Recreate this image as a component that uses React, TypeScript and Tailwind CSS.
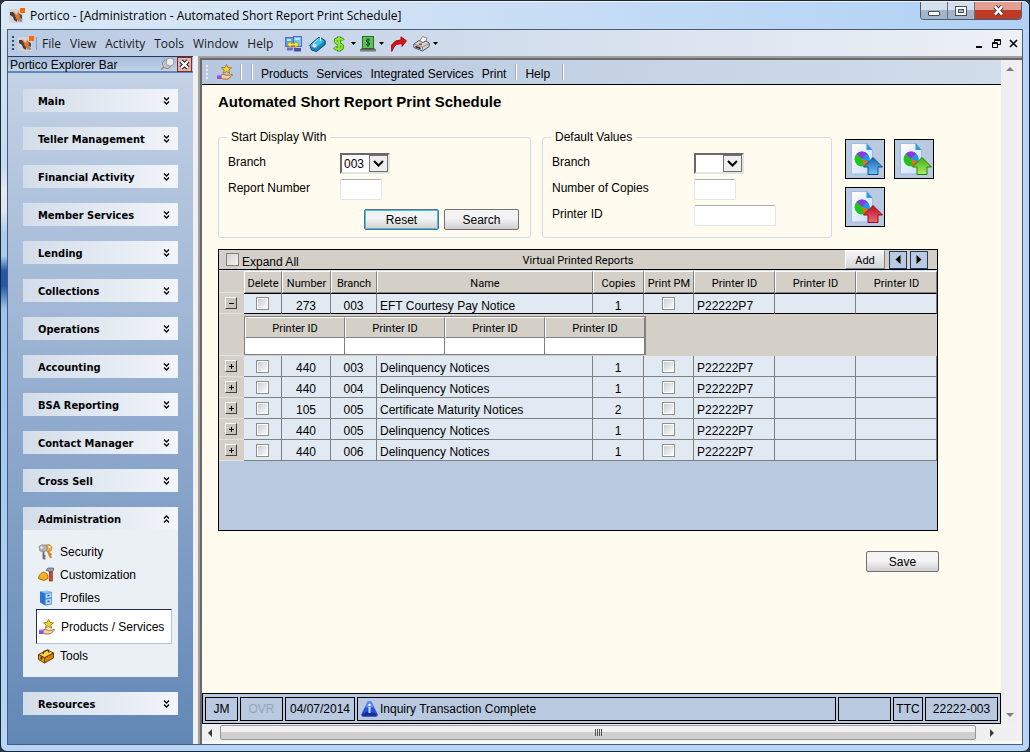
import React from "react";

function LogoIcon() {
  return (
    <svg width="16" height="16" viewBox="0 0 16 16" aria-hidden="true">
      <rect x="0" y="1" width="14" height="14" fill="#d6d3d4" />
      <path d="M1 4l3 0 4 5v5l-3-2-1-3-3-2z" fill="#3d4248" />
      <path d="M6 8l3 1 4 3v2l-4-1z" fill="#7f8b9c" />
      <path d="M9 5l4 2v4l-3-1z" fill="#36506f" />
      <path d="M4 3l4 4 1-4 2 5-1 6-3-4z" fill="#f2701a" />
      <rect x="11" y="0" width="5" height="5" fill="#ff6a00" />
    </svg>
  );
}

function HandStarIcon() {
  return (
    <svg width="16" height="16" viewBox="0 0 16 16" aria-hidden="true">
      <path d="M9.500 .5l1.500 3 3.500.3-2.700 2.200.9 3.300-3.200-1.700-3.200 1.700.9-3.300L4.500 3.800 8 3.500z" fill="#f5cf3a" stroke="#9a7a14" strokeWidth=".9" />
      <path d="M4 10.500h3l2 .7h4l2-1c1 .5 0 1.800-1 2.300l-3 2.500H6l-2-1z" fill="#f8cf9a" stroke="#9a5a22" strokeWidth=".8" />
      <rect x="0" y="10" width="4.500" height="5" fill="#8a55e0" />
      <rect x="0" y="10" width="4.500" height="1.500" fill="#c7a9ff" />
    </svg>
  );
}

function MonitorsIcon() {
  return (
    <svg width="17" height="16" viewBox="0 0 17 16" aria-hidden="true">
      <rect x=".5" y="1.500" width="8" height="9" fill="#4aa8f0" stroke="#6a5fc0" />
      <rect x="8.500" y=".5" width="8" height="10" fill="#67cbff" stroke="#6a5fc0" />
      <path d="M2 3h4v2H2zM10 2h5v2h-5z" fill="#b8ecff" />
      <rect x="2" y="11.500" width="6" height="3" fill="#6a6fc4" />
      <rect x="9" y="12" width="7" height="3.500" fill="#4b4fa4" />
      <path d="M2 8.500l4-3.500v2.300h4V5l4 3.500-4 3.500V9.700H6V12z" fill="#ffe23a" stroke="#a88c00" strokeWidth=".7" />
    </svg>
  );
}

function TagIcon() {
  return (
    <svg width="17" height="16" viewBox="0 0 17 16" aria-hidden="true">
      <path d="M.8 9L9.500 1.500l2.500.3 4.200 3v3.700L7.500 15.500l-5-1.500z" fill="#1788b8" stroke="#0a3f66" />
      <path d="M1.500 9L9.500 2l5.500 3-8 7-5-1z" fill="#3cc0e6" />
      <path d="M4 8l5-4.500" stroke="#b6f0ff" />
      <circle cx="5.500" cy="9.500" r="2" fill="#f6d3f4" />
      <path d="M11.500 5V1" stroke="#e8f8ff" strokeWidth="1.400" />
    </svg>
  );
}

function DollarIcon() {
  return (
    <svg width="12" height="16" viewBox="0 0 12 16" aria-hidden="true">
      <path d="M10 4.500C9 2.500 3 2 2.600 5 2.300 8 9.500 7.500 9.300 10.800 9 14 3 13.500 1.500 11.300M6 .5v15" fill="none" stroke="#2c7a10" strokeWidth="3.600" />
      <path d="M10 4.500C9 2.500 3 2 2.600 5 2.300 8 9.500 7.500 9.300 10.800 9 14 3 13.500 1.500 11.300M6 1v14" fill="none" stroke="#8ae62e" strokeWidth="2.200" />
    </svg>
  );
}

function CashIcon() {
  return (
    <svg width="16" height="16" viewBox="0 0 16 16" aria-hidden="true">
      <rect x="2.500" y=".5" width="11" height="12" fill="#5fc05a" stroke="#23702a" />
      <path d="M10 4.500C9 3 6 3.300 6.200 5c.2 1.600 3.800 1.200 3.600 3C9.600 9.500 7 9.600 6 8.200M8 2.300v8.400" fill="none" stroke="#0b3f12" />
      <path d="M0 13h16v2.500H0z" fill="#7c7f78" />
      <path d="M1 13h14" stroke="#3f423e" />
    </svg>
  );
}

function RedArrowIcon() {
  return (
    <svg width="16" height="16" viewBox="0 0 16 16" aria-hidden="true">
      <path d="M.7 15.500L.5 9 4.500 5 10 3.800V.8l5.500 4-4.500 5.700V7.500L5.500 8.500 3 11z" fill="#dc1414" stroke="#8a0000" strokeWidth=".8" />
    </svg>
  );
}

function PrinterIcon() {
  return (
    <svg width="17" height="16" viewBox="0 0 17 16" aria-hidden="true">
      <path d="M6 6l3.500-5.500 4.500 1.500-2 6z" fill="#fff" stroke="#777" strokeWidth=".8" />
      <path d="M.8 8L6 4.500l4 2 3-1.500 3.200 2v3.500L9.500 15 .8 11.500z" fill="#d2d2d2" stroke="#4a4a4a" strokeWidth=".9" />
      <path d="M1 8l8.500 3 6.500-3.500M9.500 11v4" fill="none" stroke="#8a8a8a" />
      <path d="M2.500 10.500l5 2" stroke="#222" strokeWidth="1.400" />
      <rect x="6" y="7.500" width="3" height="1.500" fill="#e02020" />
    </svg>
  );
}

function KeysIcon() {
  return (
    <svg width="16" height="16" viewBox="0 0 16 16" aria-hidden="true">
      <path d="M9.500 6l3.500 8M11 11l2.500-1.200" stroke="#d0872a" strokeWidth="2.200" />
      <path d="M6 1.500l5-1 3 2.500-1 4-4 .5z" fill="#f2b04a" stroke="#b87420" strokeWidth=".7" />
      <circle cx="11.500" cy="3" r="1.100" fill="#fff" />
      <path d="M5.500 6.500v8.500M5.500 12h2M5.500 14.500h2" stroke="#6f6f6f" strokeWidth="1.900" />
      <path d="M1 2.500l3-1.800 4.500.8 1 3.500-2.500 2.500L2 7z" fill="#b4b4b4" stroke="#7a7a7a" strokeWidth=".7" />
      <circle cx="3.500" cy="3.500" r="1.100" fill="#fff" />
    </svg>
  );
}

function HelmetIcon() {
  return (
    <svg width="16" height="16" viewBox="0 0 16 16" aria-hidden="true">
      <path d="M.5 11.500C1 7 4 5 6.500 5.500c3 .5 3.500 3 3.500 6L6 13.500z" fill="#f7b21b" stroke="#9a5c00" strokeWidth=".9" />
      <path d="M8 3.500l2-2.500h5.500v2.500L14 4v1h-3V4z" fill="#9ba3ad" stroke="#4b5058" strokeWidth=".7" />
      <rect x="11.300" y="5" width="3" height="9" fill="#e0442a" stroke="#7d1608" strokeWidth=".6" />
    </svg>
  );
}

function CabinetIcon() {
  return (
    <svg width="16" height="16" viewBox="0 0 16 16" aria-hidden="true">
      <path d="M2 1.500L9 .7l5 1.500v12l-7 1.300-5-3z" fill="#2c74d4" />
      <path d="M2 1.500L9 .7l5 1.500-6.500 1.300z" fill="#8fc4fa" />
      <path d="M7.500 4l6-1v4.500l-6 1zM7.500 9.500l6-1v5l-6 1.200z" fill="#b7d7f7" />
      <path d="M9.500 5.800l2-.4M9.500 11.500l2-.4" stroke="#2a4f88" strokeWidth="1.300" />
    </svg>
  );
}

function ToolboxIcon() {
  return (
    <svg width="16" height="16" viewBox="0 0 16 16" aria-hidden="true">
      <path d="M.5 6.500L9.500 2l6 3-9 4.800z" fill="#ffd24a" stroke="#5a3400" strokeWidth=".9" />
      <path d="M.5 6.500v5l6 3.500V9.800z" fill="#f0a010" stroke="#5a3400" strokeWidth=".9" />
      <path d="M6.500 9.800v5.200l9-5V5z" fill="#d98408" stroke="#5a3400" strokeWidth=".9" />
      <path d="M5 6l1-2.500 4-1.500 1 2.500" fill="none" stroke="#5a3400" strokeWidth="1.300" />
      <rect x="2.500" y="8.500" width="2" height="3" fill="#5a3400" />
    </svg>
  );
}

function InfoIcon() {
  return (
    <svg width="17" height="17" viewBox="0 0 17 17" aria-hidden="true">
      <path d="M7 1h3l7 14-1 1.500H1L0 15z" fill="#2a52d8" />
      <path d="M7 1h3l3 6-4 1-5-1z" fill="#5f8cf5" />
      <path d="M1 14l7-3 8 3-1 2.500H2z" fill="#16309c" />
      <rect x="7.500" y="4" width="2" height="2" fill="#fff" />
      <rect x="7.500" y="7" width="2" height="6" fill="#cfdcff" />
    </svg>
  );
}

function ReportIcon({ light, dark, edge }: { light: string; dark: string; edge: string }) {
  const id = "arrow" + edge.slice(1);
  return (
    <svg width="36" height="36" viewBox="0 0 36 36" aria-hidden="true">
      <defs>
        <linearGradient id={id} x1="0" y1="0" x2="0" y2="1">
          <stop offset="0" stopColor={dark} />
          <stop offset="1" stopColor={light} />
        </linearGradient>
        <linearGradient id={id + "page"} x1="0" y1="0" x2="1" y2="1">
          <stop offset="0" stopColor="#ffffff" />
          <stop offset="1" stopColor="#c8dcfa" />
        </linearGradient>
      </defs>
      <path d="M4.500 2.500h15l6 6.500v24h-21z" fill={"url(#" + id + "page)"} stroke="#9dbde8" />
      <path d="M19.500 2v7h6z" fill="#2f9ae0" />
      <circle cx="15" cy="18" r="7.500" fill="#1fc41c" />
      <path d="M15 18L9.700 12.700a7.500 7.500 0 0 1 10.600 0z" fill="#9433ee" />
      <path d="M15 18l5.300-5.300a7.500 7.500 0 0 1 1.500 8.300z" fill="#1f95f2" />
      <path d="M15 18l6.800 3a7.500 7.500 0 0 1-4.800 4.300z" fill="#f26a14" />
      <path d="M26 16.500l9.500 9.500h-4.500v7.500H21V26h-4.500z" fill={"url(#" + id + ")"} stroke={edge} />
    </svg>
  );
}

function DoubleChevron({ up = false }: { up?: boolean }) {
  return (
    <svg width="7" height="8" viewBox="0 0 7 8" aria-hidden="true">
      {up ? (
        <path d="M1 3.500L3.500 1 6 3.500M1 7.500L3.500 5 6 7.500" fill="none" stroke="#000" strokeWidth="1.300" />
      ) : (
        <path d="M1 .5L3.500 3 6 .5M1 4.500L3.500 7 6 4.500" fill="none" stroke="#000" strokeWidth="1.300" />
      )}
    </svg>
  );
}

function Caret({ className = "" }: { className?: string }) {
  return (
    <svg className={className} width="5" height="3" viewBox="0 0 5 3" aria-hidden="true">
      <path d="M0 0h5L2.500 3z" fill="#000" />
    </svg>
  );
}

function Grip({ color }: { color: string }) {
  return (
    <svg width="3" height="15" viewBox="0 0 3 15" aria-hidden="true">
      {[0, 4, 8, 12].map((y) => (
        <rect key={y} x="0" y={y} width="2" height="2" fill={color} />
      ))}
    </svg>
  );
}

function TitleBar() {
  return (
    <header className="flex h-[27px] shrink-0 items-start pl-[2px] pr-[1px]">
      <div className="flex h-[27px] items-center gap-[5px]">
        <LogoIcon />
        <h2 className="text-xs whitespace-nowrap text-black">
          Portico - [Administration - Automated Short Report Print Schedule]
        </h2>
      </div>
      <div className="ml-auto flex h-[18px] overflow-hidden rounded-b-[4px] border border-t-0 border-[#4d5b74]">
        <button aria-label="Minimize" className="flex w-[27px] items-center justify-center border-r border-[#5f6f8a] bg-linear-to-b from-[#d6e0ec] from-45% to-[#a3b4cb] to-50% pt-[6px]">
          <span className="block h-[5px] w-[12px] rounded-[1px] border border-[#48505e] bg-white" />
        </button>
        <button aria-label="Maximize" className="flex w-[27px] items-center justify-center border-r border-[#5f6f8a] bg-linear-to-b from-[#d6e0ec] from-45% to-[#a3b4cb] to-50%">
          <span className="flex h-[10px] w-[12px] items-center justify-center border border-[#48505e] bg-white">
            <span className="block h-[4px] w-[6px] border border-[#48505e] bg-[#a9bbd2]" />
          </span>
        </button>
        <button aria-label="Close" className="flex w-[46px] items-center justify-center bg-linear-to-b from-[#e3a091] from-45% to-[#bd3a24] to-50%">
          <svg width="13" height="11" viewBox="0 0 13 11" aria-hidden="true">
            <path d="M3 1.500l7 8M10 1.500l-7 8" stroke="#4d4450" strokeWidth="4.500" />
            <path d="M3 1.500l7 8M10 1.500l-7 8" stroke="#fff" strokeWidth="2.600" />
          </svg>
        </button>
      </div>
    </header>
  );
}

function MenuBar() {
  return (
    <nav aria-label="Application menu" className="flex h-[26px] shrink-0 items-center bg-linear-to-r from-[#b9cae3] to-[#edf1f6] pl-[4px] pr-[4px] pt-px">
      <Grip color="#2b4a80" />
      <span className="ml-[3px]"><LogoIcon /></span>
      <span className="ml-[2px] h-[13px] w-px bg-[#7f9cc8]" />
      <div className="ml-[5px] flex items-center gap-[9px] text-xs text-[#1b1b1b]">
        {["File", "View", "Activity", "Tools", "Window", "Help"].map((m) => (
          <button key={m}>{m}</button>
        ))}
      </div>
      <div className="ml-[12px] flex items-center">
        <button aria-label="Connections"><MonitorsIcon /></button>
        <button aria-label="Tags" className="ml-[7px]"><TagIcon /></button>
        <button aria-label="Money" className="ml-[7px] flex items-center"><DollarIcon /><Caret className="ml-[6px]" /></button>
        <button aria-label="Cash" className="ml-[4px] flex items-center"><CashIcon /><Caret className="ml-[3px]" /></button>
        <button aria-label="Go" className="ml-[7px]"><RedArrowIcon /></button>
        <button aria-label="Print" className="ml-[6px] flex items-center"><PrinterIcon /><Caret className="ml-[3px]" /></button>
      </div>
      <div className="ml-auto flex items-center gap-[8px]">
        <button aria-label="Minimize document">
          <svg width="9" height="9" viewBox="0 0 9 9"><rect x="1" y="7" width="6" height="2" fill="#000" /></svg>
        </button>
        <button aria-label="Restore document">
          <svg width="9" height="9" viewBox="0 0 9 9">
            <path d="M2.500 3V.5h6v5H6M2 1.500h7M.5 3.500h5v5h-5zM0 4.500h6" fill="none" stroke="#000" />
          </svg>
        </button>
        <button aria-label="Close document">
          <svg width="9" height="9" viewBox="0 0 9 9"><path d="M1 1l7 7M8 1L1 8" stroke="#000" strokeWidth="1.600" /></svg>
        </button>
      </div>
    </nav>
  );
}

const SECTIONS = [
  "Main", "Teller Management", "Financial Activity", "Member Services", "Lending", "Collections",
  "Operations", "Accounting", "BSA Reporting", "Contact Manager", "Cross Sell",
];

function SectionHeader({ name, open = false }: { name: string; open?: boolean }) {
  return (
    <button
      aria-expanded={open}
      className="flex h-[23px] w-full items-center justify-between bg-linear-to-r from-[#d3dde9] to-[#f2f5fa] pl-[15px] pr-[8px] font-['DejaVu_Sans_Condensed','DejaVu_Sans',sans-serif] text-[11px] font-bold text-black"
    >
      <span className="pt-[3px]">{name}</span>
      <DoubleChevron up={open} />
    </button>
  );
}

function Sidebar() {
  const link = "flex h-[23px] items-center gap-[6px] pl-[2px] text-xs text-black";
  return (
    <aside className="flex w-[185px] shrink-0 flex-col bg-linear-to-b from-[#c6d4e7] to-[#6287b6] font-['Liberation_Sans',Arial,sans-serif]">
      <div className="flex h-[17px] items-center border-b-2 border-t border-b-[#6088ba] border-t-[#2c3c58] bg-linear-to-b from-[#a3bbdc] to-[#c3d3e8] pl-[2px]">
        <h2 className="pt-px text-xs text-black">Portico Explorer Bar</h2>
        <button aria-label="Pin" className="ml-auto">
          <svg width="15" height="14" viewBox="0 0 15 14" aria-hidden="true">
            <path d="M1 12.500l5-4" stroke="#8b8b8b" strokeWidth="1.500" />
            <circle cx="7" cy="7" r="4.500" fill="#c4c4c4" stroke="#8a8a8a" />
            <circle cx="10" cy="5" r="4" fill="#ececec" stroke="#9a9a9a" />
          </svg>
        </button>
        <button aria-label="Close explorer bar" className="ml-[2px] mr-[1px] flex h-[15px] w-[15px] items-center justify-center border border-[#7c2e2a] bg-[#e3b4ae]">
          <svg width="11" height="11" viewBox="0 0 11 11" aria-hidden="true">
            <path d="M2 2l7 7M9 2L2 9" stroke="#222" strokeWidth="4.500" />
            <path d="M2 2l7 7M9 2L2 9" stroke="#fff" strokeWidth="2.300" />
          </svg>
        </button>
      </div>
      <nav aria-label="Explorer" className="flex flex-col gap-[15px] px-[15px] pt-[16px]">
        {SECTIONS.map((s) => (
          <SectionHeader key={s} name={s} />
        ))}
        <div className="bg-[#eaf0f4] pb-[10px]">
          <SectionHeader name="Administration" open />
          <div className="px-[13px] pt-[10px]">
            <a href="#security" className={link}><KeysIcon />Security</a>
            <a href="#customization" className={link}><HelmetIcon />Customization</a>
            <a href="#profiles" className={link}><CabinetIcon />Profiles</a>
            <a href="#products" className="-mr-[7px] flex h-[35px] items-center gap-[6px] border border-b-[#b4c4d8] border-l-[#1f3050] border-r-[#b4c4d8] border-t-[#1f3050] bg-white pl-[2px] text-xs whitespace-nowrap text-black">
              <HandStarIcon />Products / Services
            </a>
            <a href="#tools" className={link}><ToolboxIcon />Tools</a>
          </div>
        </div>
        <SectionHeader name="Resources" />
      </nav>
    </aside>
  );
}

function PageToolbar() {
  const sep = "h-[16px] w-[2px] border-l border-[#a3adbb] bg-white";
  return (
    <div className="flex h-[25px] shrink-0 items-center border-b border-black bg-linear-to-r from-[#b7c7df] to-[#d1ddea] pl-[4px] text-xs text-black">
      <Grip color="#e8edf4" />
      <button aria-label="Products and services" className="ml-[8px]"><HandStarIcon /></button>
      <span className={sep + " ml-[7px]"} />
      <span className={sep + " ml-[9px]"} />
      <div className="ml-[8px] flex gap-[8px] pt-[3px]">
        {["Products", "Services", "Integrated Services", "Print"].map((m) => (
          <button key={m}>{m}</button>
        ))}
      </div>
      <span className={sep + " ml-[9px]"} />
      <button className="ml-[8px] pt-[3px]">Help</button>
      <span className={sep + " ml-[12px]"} />
    </div>
  );
}

const BTN = "h-[21px] rounded-[2px] border bg-linear-to-b from-[#f3f3f3] from-45% to-[#cfcfcf] text-xs text-black";
const FIELD = "h-[21px] rounded-[2px] border border-[#e1e5ec] border-t-[#abadb3] bg-white px-[3px] text-xs";

function BranchSelect({ id, value }: { id: string; value: string }) {
  return (
    <div className="relative h-[21px] w-[50px]">
      <select
        id={id}
        defaultValue={value}
        className="h-full w-full appearance-none border-2 border-b-[#e3e3e3] border-l-[#696969] border-r-[#e3e3e3] border-t-[#696969] bg-white pl-[2px] text-xs text-black"
      >
        <option value={value}>{value}</option>
      </select>
      <span className="pointer-events-none absolute right-[2px] top-[2px] flex h-[17px] w-[19px] items-center justify-center border border-[#707070] bg-[#eeeeee]">
        <svg width="11" height="7" viewBox="0 0 11 7" aria-hidden="true">
          <path d="M1 1l4.500 4.500L10 1" fill="none" stroke="#000" strokeWidth="2" />
        </svg>
      </span>
    </div>
  );
}

function FilterArea() {
  const box = "min-w-0 rounded-[3px] border border-[#d0dcea] px-[9px] pt-[9px] pb-[8px]";
  const legend = "ml-[-1px] px-[4px] text-xs leading-[14px] text-black";
  const row = "mb-[5px] flex items-start text-xs";
  const tool = "flex h-[40px] w-[40px] items-center justify-center border border-black bg-[#b8c9e0]";
  return (
    <div className="mt-[19px] flex items-start">
      <fieldset className={box + " h-[108px] w-[313px] shrink-0"}>
        <legend className={legend}>Start Display With</legend>
        <div className={row}>
          <label htmlFor="branch" className="w-[112px] pt-px">Branch</label>
          <BranchSelect id="branch" value="003" />
        </div>
        <div className={row}>
          <label htmlFor="report" className="w-[112px] pt-px">Report Number</label>
          <input id="report" className={FIELD + " w-[42px]"} />
        </div>
        <div className="mt-[9px] flex justify-end gap-[5px] pr-[2px]">
          <button className={BTN + " w-[75px] border-[#5a6f7a] inset-ring inset-ring-[#3cc4f0]"}>Reset</button>
          <button className={BTN + " w-[75px] border-[#707070]"}>Search</button>
        </div>
      </fieldset>
      <fieldset className={box + " ml-[11px] h-[108px] w-[290px] shrink-0"}>
        <legend className={legend}>Default Values</legend>
        <div className={row}>
          <label htmlFor="default-branch" className="w-[142px] pt-px">Branch</label>
          <BranchSelect id="default-branch" value="" />
        </div>
        <div className={row}>
          <label htmlFor="copies" className="w-[142px] pt-px">Number of Copies</label>
          <input id="copies" className={FIELD + " w-[42px]"} />
        </div>
        <div className={row}>
          <label htmlFor="printer" className="w-[142px] pt-px">Printer ID</label>
          <input id="printer" className={FIELD + " w-[82px]"} />
        </div>
      </fieldset>
      <div className="ml-[13px] mt-[9px] grid grid-cols-2 gap-x-[9px] gap-y-[8px]">
        <button aria-label="Report, blue arrow" className={tool}>
          <ReportIcon light="#6cc8f4" dark="#1a5fae" edge="#134f8c" />
        </button>
        <button aria-label="Report, green arrow" className={tool}>
          <ReportIcon light="#a8f05c" dark="#3fae1a" edge="#2a7d10" />
        </button>
        <button aria-label="Report, red arrow" className={tool}>
          <ReportIcon light="#f0687a" dark="#b01420" edge="#8c101c" />
        </button>
      </div>
    </div>
  );
}

const ROWS = [
  { number: "273", branch: "003", name: "EFT Courtesy Pay Notice", copies: "1" },
  { number: "440", branch: "003", name: "Delinquency Notices", copies: "1" },
  { number: "440", branch: "004", name: "Delinquency Notices", copies: "1" },
  { number: "105", branch: "005", name: "Certificate Maturity Notices", copies: "2" },
  { number: "440", branch: "005", name: "Delinquency Notices", copies: "1" },
  { number: "440", branch: "006", name: "Delinquency Notices", copies: "1" },
];

const HEADS = ["Delete", "Number", "Branch", "Name", "Copies", "Print PM", "Printer ID", "Printer ID", "Printer ID"];

const CHECK =
  "block h-[13px] w-[13px] appearance-none border border-[#8e8f8f] bg-linear-to-br from-[#c4cad0] to-[#ffffff] ring-1 ring-inset ring-white";

const HEAD_CELL =
  "h-[21px] border-b border-b-[#808080] border-l border-l-white border-r border-r-[#808080] border-t border-t-white bg-[#d4d0c8] p-0 pt-[3px] text-center font-['Roboto',sans-serif] text-[11px] leading-[16px] font-normal";

function ReportRow({ row, index }: { row: (typeof ROWS)[number]; index: number }) {
  const open = index === 0;
  const base =
    "h-[21px] border-r border-r-[#808080] bg-[#e1eaf2] border-b " +
    (open ? "border-b-black border-t border-t-black" : "border-b-[#808080]");
  const cell = base + " p-0 pt-[5px] " + (open ? "leading-[14px]" : "leading-[15px]");
  return (
    <tr>
      <td className="h-[21px] border-b border-b-[#e4e2dd] bg-[#d4d0c8] p-0">
        <button
          aria-label={open ? "Collapse row" : "Expand row"}
          className="ml-[6px] flex h-[12px] w-[12px] items-center justify-center border border-b-[#404040] border-l-white border-r-[#404040] border-t-white bg-[#c8c5be]"
        >
          <svg width="7" height="7" viewBox="0 0 7 7" aria-hidden="true">
            <path d={open ? "M1 3.500h5" : "M1 3.500h5M3.500 1v5"} stroke="#000" />
          </svg>
        </button>
      </td>
      <td className={base + " p-0"}>
        <input type="checkbox" aria-label={"Delete report " + row.number} className={CHECK + " mx-auto"} />
      </td>
      <td className={cell + " text-center"}>{row.number}</td>
      <td className={cell + " text-center"}>{row.branch}</td>
      <td className={cell + " pl-[3px]"}>{row.name}</td>
      <td className={cell + " text-center"}>{row.copies}</td>
      <td className={base + " p-0"}>
        <input type="checkbox" aria-label={"Print PM for report " + row.number} className={CHECK + " mx-auto"} />
      </td>
      <td className={cell + " pl-[3px]"}>P22222P7</td>
      <td className={base} />
      <td className={base} />
    </tr>
  );
}

function NestedPrinters() {
  return (
    <tr>
      <td className="border-b border-b-[#e4e2dd] bg-[#d4d0c8] p-0" />
      <td colSpan={9} className="bg-[#d4d0c8] p-0 pt-[2px] pb-px">
        <table className="w-[402px] table-fixed border-separate border-spacing-0 border border-[#808080]">
          <thead>
            <tr>
              {[0, 1, 2, 3].map((i) => (
                <th key={i} className={HEAD_CELL}>Printer ID</th>
              ))}
            </tr>
          </thead>
          <tbody>
            <tr>
              {[0, 1, 2, 3].map((i) => (
                <td key={i} className="h-[16px] border-r border-r-[#808080] bg-white p-0" />
              ))}
            </tr>
          </tbody>
        </table>
      </td>
    </tr>
  );
}

function ReportsPanel() {
  const pager = "flex h-[18px] w-[18px] items-center justify-center border border-[#1f3a66] bg-[#b8c9e0]";
  return (
    <section className="mt-[11px] h-[282px] w-full max-w-[720px] border border-black bg-[#b8c9e0]">
      <div className="grid h-[20px] grid-cols-[1fr_auto_1fr] items-center border-b border-black bg-[#d4d0c8]">
        <div className="flex items-center">
          <input
            id="expand-all"
            type="checkbox"
            className="ml-[7px] h-[13px] w-[13px] appearance-none border border-[#808080] bg-linear-to-br from-[#d2d2d2] to-[#f4f4f4]"
          />
          <label htmlFor="expand-all" className="ml-[3px] pt-[5px] text-xs leading-[14px]">Expand All</label>
        </div>
        <h2 className="pt-[3px] font-['Roboto',sans-serif] text-[11px] leading-[16px]">Virtual Printed Reports</h2>
        <div className="flex items-center justify-end gap-[3px] pr-[9px]">
          <button className="mr-px h-[19px] w-[40px] border border-b-[#808080] border-l-white border-r-[#808080] border-t-white bg-linear-to-b from-[#f5f5f5] to-[#d6d6d6] pt-[2px] font-['Roboto',sans-serif] text-[11px] leading-[15px]">
            Add
          </button>
          <button aria-label="Previous" className={pager}>
            <svg width="6" height="9" viewBox="0 0 6 9"><path d="M5.500 0v9L.5 4.500z" fill="#000" /></svg>
          </button>
          <button aria-label="Next" className={pager}>
            <svg width="6" height="9" viewBox="0 0 6 9"><path d="M.5 0v9l5-4.500z" fill="#000" /></svg>
          </button>
        </div>
      </div>
      <table className="w-full table-fixed border-separate border-spacing-0 border-t border-[#d4e0ee] text-xs text-black">
        <colgroup>
          <col className="w-[25px]" />
          <col className="w-[38px]" />
          <col className="w-[49px]" />
          <col className="w-[46px]" />
          <col />
          <col className="w-[51px]" />
          <col className="w-[50px]" />
          <col className="w-[81px]" />
          <col className="w-[81px]" />
          <col className="w-[81px]" />
        </colgroup>
        <thead>
          <tr className="h-[22px]">
            <th className="border-b border-b-[#e4e2dd] bg-[#d4d0c8] p-0" aria-label="Expand" />
            {HEADS.map((h, i) => (
              <th key={i} className={HEAD_CELL}>{h}</th>
            ))}
          </tr>
        </thead>
        <tbody>
          <ReportRow row={ROWS[0]} index={0} />
          <NestedPrinters />
          {ROWS.slice(1).map((r, i) => (
            <ReportRow key={i} row={r} index={i + 1} />
          ))}
        </tbody>
      </table>
    </section>
  );
}

function StatusBar() {
  const cell = "flex h-[24px] items-center justify-center border border-black whitespace-nowrap";
  return (
    <footer className="flex h-[31px] shrink-0 items-center gap-[2px] border border-black bg-[#b8c9e0] px-[2px] text-xs text-black">
      <span className={cell + " w-[33px] pt-px"}>JM</span>
      <span className={cell + " w-[43px] pt-px text-[#9aa5b5]"}>OVR</span>
      <span className={cell + " w-[70px] pt-px"}>04/07/2014</span>
      <span className="flex h-[24px] min-w-0 flex-1 items-center gap-[2px] border border-black pl-[3px] whitespace-nowrap">
        <InfoIcon />
        <span className="pt-px">Inquiry Transaction Complete</span>
      </span>
      <span className={cell + " w-[53px]"} />
      <span className={cell + " w-[30px] pt-px"}>TTC</span>
      <span className={cell + " w-[73px] pt-px"}>22222-003</span>
    </footer>
  );
}

function VerticalScroll() {
  return (
    <div aria-hidden="true" className="flex w-[17px] shrink-0 flex-col items-center justify-between bg-[#efefef] py-[7px]">
      <svg width="8" height="4" viewBox="0 0 8 4"><path d="M0 4l4-4 4 4z" fill="#7f7f7f" /></svg>
      <svg width="8" height="4" viewBox="0 0 8 4"><path d="M0 0l4 4 4-4z" fill="#7f7f7f" /></svg>
    </div>
  );
}

function HorizontalScroll() {
  return (
    <div aria-hidden="true" className="flex h-[17px] shrink-0 items-center bg-[#f0f0f0] pl-[6px] pr-[28px]">
      <svg width="4" height="8" viewBox="0 0 4 8"><path d="M4 0L0 4l4 4z" fill="#3a3a3a" /></svg>
      <div className="ml-[8px] mr-[14px] flex h-[15px] flex-1 items-center justify-center gap-[1px] rounded-[2px] border border-[#979797] bg-linear-to-b from-[#f2f2f2] from-45% to-[#cfcfcf] to-50%">
        {[0, 1, 2, 3].map((i) => (
          <span key={i} className="h-[7px] w-px bg-[#555]" />
        ))}
      </div>
      <svg width="4" height="8" viewBox="0 0 4 8"><path d="M0 0l4 4-4 4z" fill="#3a3a3a" /></svg>
    </div>
  );
}

export default function App() {
  return (
    <div className="min-h-screen bg-[#2b3340] font-['Open_Sans','Noto_Sans',sans-serif]">
      <div className="flex min-h-screen flex-col rounded-[7px] border border-[#1f2630] bg-[linear-gradient(to_bottom,#d3e4f5_0%,#c4dcf4_22%,#e4e8f2_25%,#dfe6f2_28%,#a9cbee_31%,#a9cbee_34%,#1f58ae_36%,#1f58ae_38%,#9cc4ee_41%,#b5d6f8_100%)] px-[6px] pb-[6px]">
        <div className="-mx-[6px] rounded-t-[6px] border-t border-white/70 bg-linear-to-r from-[#d9e8f7] via-[#d0e2f4] via-35% to-[#b0d1f5] px-[6px]">
          <TitleBar />
        </div>
        <div className="-mr-[6px] flex flex-1 flex-col bg-[#b5d6f8] pr-[6px]">
          <div className="flex flex-1 flex-col border border-[#4b5b70] bg-[#f0f0f0]">
            <MenuBar />
            <div className="flex flex-1">
              <Sidebar />
              <div className="ml-[5px] flex min-w-0 flex-1 border-l-2 border-t-2 border-[#a0a0a0] font-['Liberation_Sans',Arial,sans-serif]">
                <div className="flex min-w-0 flex-1 flex-col border-l-2 border-t-2 border-[#696969]">
                  <div className="flex flex-1 pr-[4px]">
                    <div className="flex min-w-0 flex-1 flex-col bg-[#fffbee]">
                      <PageToolbar />
                      <main className="flex-1 px-[16px] pt-[8px]">
                        <h1 className="text-[15px] leading-[18px] font-bold text-black">Automated Short Report Print Schedule</h1>
                        <FilterArea />
                        <ReportsPanel />
                        <div className="mt-[20px] flex max-w-[721px] justify-end">
                          <button className={BTN + " w-[73px] border-[#707070]"}>Save</button>
                        </div>
                      </main>
                      <StatusBar />
                    </div>
                    <VerticalScroll />
                  </div>
                  <HorizontalScroll />
                  <div className="h-[3px] bg-[#f7f7f7]" />
                </div>
              </div>
            </div>
          </div>
        </div>
      </div>
    </div>
  );
}
